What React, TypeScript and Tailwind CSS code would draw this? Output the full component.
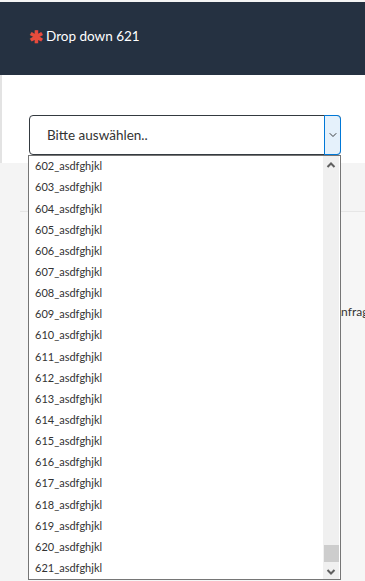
import { ChevronDown } from 'lucide-react';

const items = Array.from({ length: 20 }, (_, i) => `${602 + i}_asdfghjkl`);

function Arrow({ up }: { up?: boolean }) {
  return (
    <svg width="10" height="8" viewBox="0 0 10 8" className="text-[#606060]">
      <path
        d={up ? 'M1.5 6 L5 2.5 L8.5 6' : 'M1.5 2 L5 5.5 L8.5 2'}
        fill="none"
        stroke="currentColor"
        strokeWidth="2"
      />
    </svg>
  );
}

export default function App() {
  return (
    <div className="min-h-[581px] bg-[#f4f4f4] pt-[2px] font-['Lato','Open_Sans',sans-serif] text-[#333]">
      <div className="h-[73px] bg-[#253141] flex items-center pl-[29px] pb-[4px]">
        <span className="text-[#e74c3c] text-[17px] font-bold mr-[3px] leading-none">✱</span>
        <span className="text-white text-[13.5px]">Drop down 621</span>
      </div>

      <div className="relative h-[88px] bg-white border-l-2 border-[#e3e3e3] pt-[40px] pl-[27px] pr-[24px]">
        <div className="flex h-[40px] rounded-[4px] border border-[#343a40]">
          <div className="flex-1 flex items-center pl-[17px] text-[13.5px] text-[#333]">Bitte auswählen..</div>
          <div className="w-[17px] -my-px -mr-px rounded-r-[4px] border border-[#0078d7] bg-[#e5f1fb] flex items-center justify-center">
            <ChevronDown size={12} strokeWidth={1.75} className="text-[#222]" />
          </div>
        </div>

        <div className="absolute left-[26px] top-[80px] z-10 w-[313px] h-[425px] border border-[#767676] bg-white flex">
          <div className="flex-1 flex flex-col overflow-hidden">
            {items.map((it) => (
              <div key={it} className="h-[21.15px] shrink-0 flex items-center pl-[6px] text-[11px] text-[#333]">
                {it}
              </div>
            ))}
          </div>
          <div className="w-[16px] bg-[#f0f0f0] flex flex-col items-center mr-px">
            <div className="h-[17px] flex items-center justify-center">
              <Arrow up />
            </div>
            <div className="flex-1 flex flex-col justify-end">
              <div className="w-[15px] h-[17px] bg-[#cdcdcd] mb-[2px]" />
            </div>
            <div className="h-[15px] flex items-center justify-center">
              <Arrow />
            </div>
          </div>
        </div>
      </div>

      <div className="mt-[48px] ml-[20px] border-t border-[#e6e6e6] bg-[#f6f6f6] h-[370px] pt-[91px] pl-[313px] overflow-hidden">
        <div className="text-[12px] text-[#333] whitespace-nowrap">Anfrage</div>
      </div>
    </div>
  );
}
